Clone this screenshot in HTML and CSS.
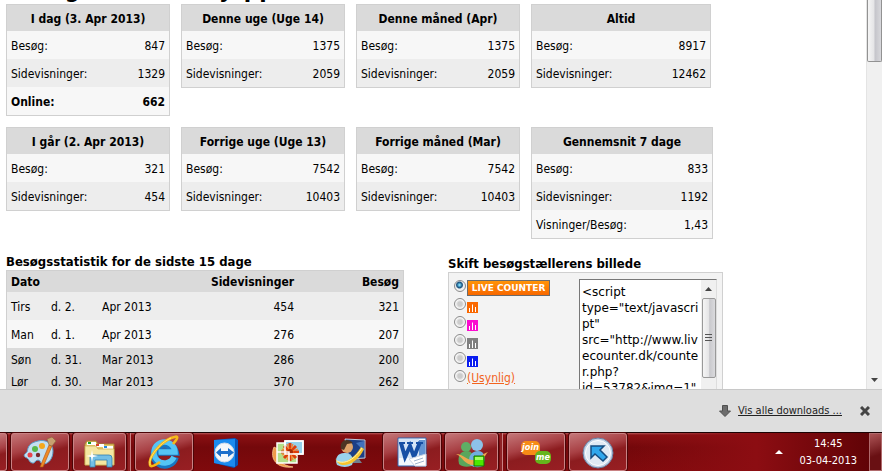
FILE: index.html
```
<!DOCTYPE html>
<html lang="da">
<head>
<meta charset="utf-8">
<title>Besøgsstatistik</title>
<link rel="stylesheet" href="styles.css">
</head>
<body>
<div class="viewport">
  <main class="page">
    <h1>Besøgstælleren hyrpp</h1>
    <div class="cards">
      <table class="card">
        <thead><tr><th colspan="2">I dag (3. Apr 2013)</th></tr></thead>
        <tbody>
          <tr><td>Besøg:</td><td>847</td></tr>
          <tr><td>Sidevisninger:</td><td>1329</td></tr>
          <tr class="strong"><td>Online:</td><td>662</td></tr>
        </tbody>
      </table>
      <table class="card">
        <thead><tr><th colspan="2">Denne uge (Uge 14)</th></tr></thead>
        <tbody>
          <tr><td>Besøg:</td><td>1375</td></tr>
          <tr><td>Sidevisninger:</td><td>2059</td></tr>
        </tbody>
      </table>
      <table class="card">
        <thead><tr><th colspan="2">Denne måned (Apr)</th></tr></thead>
        <tbody>
          <tr><td>Besøg:</td><td>1375</td></tr>
          <tr><td>Sidevisninger:</td><td>2059</td></tr>
        </tbody>
      </table>
      <table class="card total">
        <thead><tr><th colspan="2">Altid</th></tr></thead>
        <tbody>
          <tr><td>Besøg:</td><td>8917</td></tr>
          <tr><td>Sidevisninger:</td><td>12462</td></tr>
        </tbody>
      </table>
      <table class="card">
        <thead><tr><th colspan="2">I går (2. Apr 2013)</th></tr></thead>
        <tbody>
          <tr><td>Besøg:</td><td>321</td></tr>
          <tr><td>Sidevisninger:</td><td>454</td></tr>
        </tbody>
      </table>
      <table class="card">
        <thead><tr><th colspan="2">Forrige uge (Uge 13)</th></tr></thead>
        <tbody>
          <tr><td>Besøg:</td><td>7542</td></tr>
          <tr><td>Sidevisninger:</td><td>10403</td></tr>
        </tbody>
      </table>
      <table class="card">
        <thead><tr><th colspan="2">Forrige måned (Mar)</th></tr></thead>
        <tbody>
          <tr><td>Besøg:</td><td>7542</td></tr>
          <tr><td>Sidevisninger:</td><td>10403</td></tr>
        </tbody>
      </table>
      <table class="card">
        <thead><tr><th colspan="2">Gennemsnit 7 dage</th></tr></thead>
        <tbody>
          <tr><td>Besøg:</td><td>833</td></tr>
          <tr><td>Sidevisninger:</td><td>1192</td></tr>
          <tr><td>Visninger/Besøg:</td><td>1,43</td></tr>
        </tbody>
      </table>
    </div>

    <div class="columns">
      <section class="history">
        <h2>Besøgsstatistik for de sidste 15 dage</h2>
        <table class="days">
          <colgroup><col class="c-day"><col class="c-date"><col class="c-month"><col class="c-views"><col></colgroup>
          <thead><tr><th colspan="3">Dato</th><th class="num">Sidevisninger</th><th class="num">Besøg</th></tr></thead>
          <tbody>
            <tr class="even"><td>Tirs</td><td>d. 2.</td><td>Apr 2013</td><td class="num">454</td><td class="num">321</td></tr>
            <tr class="odd"><td>Man</td><td>d. 1.</td><td>Apr 2013</td><td class="num">276</td><td class="num">207</td></tr>
            <tr class="weekend"><td>Søn</td><td>d. 31.</td><td>Mar 2013</td><td class="num">286</td><td class="num">200</td></tr>
            <tr class="weekend"><td>Lør</td><td>d. 30.</td><td>Mar 2013</td><td class="num">370</td><td class="num">262</td></tr>
          </tbody>
        </table>
      </section>

      <section class="picker">
        <h2>Skift besøgstællerens billede</h2>
        <form class="box">
          <div class="choices">
            <label class="first"><input type="radio" name="img" checked><span class="badge">LIVE COUNTER</span></label>
            <label><input type="radio" name="img" aria-label="Orange"><svg class="chip orange" viewBox="0 0 11 11"><path d="M2.500 10V6M5.500 10V2.500M8.500 10V5"/></svg></label>
            <label><input type="radio" name="img" aria-label="Pink"><svg class="chip pink" viewBox="0 0 11 11"><path d="M2.500 10V6M5.500 10V2.500M8.500 10V5"/></svg></label>
            <label><input type="radio" name="img" aria-label="Grå"><svg class="chip grey" viewBox="0 0 11 11"><path d="M2.500 10V6M5.500 10V2.500M8.500 10V5"/></svg></label>
            <label><input type="radio" name="img" aria-label="Blå"><svg class="chip blue" viewBox="0 0 11 11"><path d="M2.500 10V6M5.500 10V2.500M8.500 10V5"/></svg></label>
            <label><input type="radio" name="img" aria-label="Usynlig"><a href="#usynlig">(Usynlig)</a></label>
          </div>
          <div class="code">
            <textarea aria-label="Kode" spellcheck="false">&lt;script
type="text/javascri
pt"
src="http://www.liv
ecounter.dk/counte
r.php?
id=53782&amp;img=1"</textarea>
            <div class="rail">
              <svg class="arrow" viewBox="0 0 7 4"><path d="M0 4L3.500 0L7 4Z"/></svg>
              <div class="thumb"><svg viewBox="0 0 7 9"><path d="M0 .5H7M0 3.500H7M0 6.500H7"/></svg></div>
            </div>
          </div>
        </form>
      </section>
    </div>
  </main>
  <div class="scrollbar">
    <div class="scroll-thumb"></div>
    <svg class="arrow" viewBox="0 0 7 4"><path d="M0 0H7L3.500 4Z"/></svg>
  </div>
</div>

<div class="downloads">
  <svg class="down" viewBox="0 0 12 12"><path d="M3.500 .5H8.500V6H11.500L6 11.500L.5 6H3.500Z"/></svg>
  <a href="#downloads">Vis alle downloads ...</a>
  <button class="close" aria-label="Luk"><svg viewBox="0 0 10 10"><path d="M1 1L9 9M9 1L1 9"/></svg></button>
</div>

<footer class="taskbar">
  <button class="task cut" aria-label="Program"></button>
  <button class="task" aria-label="Paint">
    <svg viewBox="0 0 34 34">
      <path d="M15 6C22 4 30 8 30 16C30 23 26 29 20 29C17 29 18 25 15 25C12 25 12 29 9 28C6 27 6 24 4 23C1 22 0 20 3 18C5 17 4 14 6 11C8 8 11 7 15 6Z" fill="#c4dff0" stroke="#5c9cc8"/>
      <circle cx="7" cy="20" r="2.500" fill="#e8434a"/><circle cx="12" cy="14" r="3" fill="#58b84a"/><circle cx="19" cy="11" r="3" fill="#f5a81c"/><circle cx="15" cy="20" r="2.200" fill="#77282c"/>
      <path d="M26 10L17 32L20 32L29 11Z" fill="#f08a24" stroke="#a85418" stroke-width=".6"/><path d="M24 4L29 2L33 6L29 11L26 10Z" fill="#c8a070" stroke="#896137" stroke-width=".6"/>
    </svg>
  </button>
  <div class="stack">
    <button class="task" aria-label="Stifinder">
      <svg viewBox="0 0 34 34">
        <path d="M2 9L4 6H13L15 9H31V30H2Z" fill="#e5c866" stroke="#a98435"/><path d="M4 7H13V10H4ZM12 9H21V12H12ZM20 11H30V14H20Z" fill="#fff"/><path d="M5 7H8V9H5Z" fill="#16a027"/><path d="M13 9H16V11H13Z" fill="#d94028"/><path d="M21 11H24V13H21Z" fill="#2189e0"/>
        <path d="M2 11H13L15 14H31V30H2Z" fill="#f5e6a0" stroke="#c8a650" stroke-width=".7"/><path d="M7 32V22Q7 20 9 20H26Q29 20 29 23V32H24V25H12V32Z" fill="#72bfe5" stroke="#317fb0" stroke-width=".8"/><path d="M9 15L10 20L15 21L10 22L9 27L8 22L3 21L8 20Z" fill="#fff"/>
      </svg>
    </button>
    <span class="edge"></span>
  </div>
  <button class="task" aria-label="Internet Explorer">
    <svg viewBox="0 0 34 34">
      <path d="M28 22A10.500 10.500 0 1 1 28 17H11.500" fill="none" stroke="#1678c4" stroke-width="7.500"/><path d="M27 22A10.500 10.500 0 1 1 28 17H11.500" fill="none" stroke="#55c5f5" stroke-width="5.500"/>
      <path d="M26 9C32 2 32 0 24 3C13 8 1 22 3 30C4 33 10 29 13 27" fill="none" stroke="#f7b918" stroke-width="2.600"/><path d="M24 3C13 8 1 22 3 30" fill="none" stroke="#ffe56b" stroke-width="1"/>
    </svg>
  </button>
  <button class="task plain" aria-label="TeamViewer">
    <svg viewBox="0 0 34 34">
      <path d="M5 5L26 3L29 5V30L25 33L5 28Z" fill="#0755ba"/><path d="M5 5L26 4V32L5 28Z" fill="#1b8bf0"/><circle cx="15.500" cy="17.500" r="9.500" fill="#f5f7fa" stroke="#d2dcea"/><path d="M7 17.500L12 13V16H19V13L25 17.500L19 22V19H12V22Z" fill="#1c6fcb"/>
    </svg>
  </button>
  <button class="task plain" aria-label="Billeder">
    <svg viewBox="0 0 34 34">
      <path d="M3 12C-2 24 6 34 22 32C10 30 5 25 7 14Z" fill="#ef9b4a" stroke="#ffd29a" stroke-width=".7"/>
      <path d="M6 8H26V28H6Z" fill="#b4e08a" stroke="#fff" stroke-width="1.500"/><path d="M14 6H32V19H14Z" fill="#95d1ed" stroke="#fff" stroke-width="1.500"/>
      <g stroke="#de3e0c" stroke-width="3"><path d="M19 8V26M10 17H28M13 11L25 23M25 11L13 23"/></g><g stroke="#ff842d" stroke-width="1.300"><path d="M16 9L22 25M11 14L27 20M22 9L16 25M27 14L11 20"/></g><circle cx="19" cy="17" r="3" fill="#a62b08"/><path d="M14 6H32V19H14ZM6 17H18V28" fill="none" stroke="#fff" stroke-width="1.500"/>
    </svg>
  </button>
  <button class="task plain" aria-label="Fjernskrivebord">
    <svg viewBox="0 0 34 34">
      <path d="M12 4L32 5V23L16 24Z" fill="#1d3f86" stroke="#c1cbdc"/><path d="M23 8L31 6V16Z" fill="#4271bb"/><path d="M18 24H26L29 28H15Z" fill="#71808f"/>
      <path d="M4 30C1 23 5 17 13 18C20 19 21 25 19 30Q12 34 4 30Z" fill="#9ad3ec"/><circle cx="14" cy="12" r="6" fill="#dfa46b"/><path d="M8 14C6 4 16 3 20 8L14 9L11 15Z" fill="#4d3423"/>
      <path d="M2 23C4 30 18 29 28 12L31 14C24 30 6 36 2 23Z" fill="#f7c52f"/><path d="M4 26C12 30 22 24 29 13" fill="none" stroke="#fff8b8"/>
    </svg>
  </button>
  <button class="task" aria-label="Word">
    <svg viewBox="0 0 34 34">
      <path d="M3 3H31V31H3Z" fill="#f4f8fd" stroke="#2f62ad"/><path d="M4 4H24V23H4Z" fill="#d4e4f6"/><path d="M24 5H30V20L24 25Z" fill="#6395d4"/><path d="M6 8L10 22L15 11L19 22L25 7" fill="none" stroke="#164fa5" stroke-width="4"/><path d="M4 8H10M12 8H18M21 8H28" stroke="#164fa5" stroke-width="2"/><path d="M14 24L31 19V31H20Z" fill="#fff" stroke="#c9d5e6"/><path d="M19 26L28 23M20 29L29 26" stroke="#9fb3ce"/>
    </svg>
  </button>
  <div class="stack">
    <button class="task" aria-label="Messenger">
      <svg viewBox="0 0 34 34">
        <circle cx="11" cy="12" r="5" fill="#5fae65"/><path d="M4 29C2 20 6 16 12 16C18 16 19 22 17 31Q8 33 4 29Z" fill="#5aa65c"/><circle cx="22" cy="10" r="6" fill="#8dc2e8"/><path d="M15 30C12 21 17 16 23 16C30 16 31 23 28 31Q21 34 15 30Z" fill="#71aede"/>
        <path d="M1 19C9 19 10 25 18 25C25 25 26 19 33 17C29 20 29 29 19 30C9 30 8 22 1 19Z" fill="#eba94e"/><path d="M19 21H29V31H19Z" fill="#4ce800" stroke="#157000"/><path d="M20 22H28V25H20Z" fill="#a2ff62"/>
      </svg>
    </button>
    <span class="edge"></span>
  </div>
  <button class="task" aria-label="join.me">
    <span class="joinme"><b class="join">join</b><b class="me">me</b></span>
  </button>
  <button class="task" aria-label="Markør">
    <svg viewBox="0 0 34 34">
      <circle cx="17" cy="18" r="15" fill="#c2d2e6" stroke="#6781a4"/><circle cx="17" cy="18" r="12.500" fill="#dfe9f4" stroke="#fff"/><path d="M10 11H23L19 15L26 22L22 26L14 19L10 23Z" fill="#30a7ed" stroke="#164c80" stroke-width="1.500"/>
    </svg>
  </button>
  <div class="tray">
    <svg class="arrow up" viewBox="0 0 8 4"><path d="M0 4L4 0L8 4Z"/></svg>
    <div class="clock"><span>14:45</span><span>03-04-2013</span></div>
    <button class="desktop" aria-label="Vis skrivebord"></button>
  </div>
</footer>
</body>
</html>
```
FILE: styles.css
```
* { box-sizing: border-box; }

body {
  margin: 0;
  height: 100vh;
  display: flex;
  flex-direction: column;
  overflow: hidden;
  background: #fff;
  color: #000;
  font: 12px/16px "DejaVu Sans Condensed", "DejaVu Sans", sans-serif;
}

button { margin: 0; padding: 0; border: 0; background: none; font: inherit; }

.viewport { flex: 1; min-height: 0; display: flex; }

.page { flex: 1; min-width: 0; overflow: hidden; padding-left: 6px; }

h1 { margin: -25px 0 0; font-size: 24px; line-height: 29px; white-space: nowrap; }

.cards {
  display: grid;
  grid-template-columns: repeat(3, 164px) 182px;
  gap: 11px;
  align-items: start;
}

table { width: 100%; border: 1px solid #d0d0d0; border-spacing: 0; }
td, th { padding: 1px 4px 0; }
th { background: #dadada; font-weight: bold; }

.card th { height: 26px; padding-top: 2px; text-align: center; }
.card td { height: 28px; padding-top: 2px; background: #f7f7f7; }
.card td:last-child { text-align: right; }
.card tr:nth-child(even) td { background: #ededed; }
.total { width: 180px; }
.strong { font-weight: bold; }

.columns { display: flex; gap: 44px; padding-top: 15px; }
.history { width: 398px; }
.picker { width: 275px; padding-top: 2px; }

h2 { margin: 0; font-size: 13px; line-height: 16px; white-space: nowrap; }

.days { table-layout: fixed; }
.days th { height: 21px; text-align: left; }
.days td { height: 28px; padding-top: 2px; }
.days .num { text-align: right; }
.even td { background: #ededed; }
.odd td { background: #f7f7f7; }
.days .weekend td { height: 22px; background: #dadada; }
.c-day { width: 40px; }
.c-date { width: 51px; }
.c-month { width: 100px; }
.c-views { width: 100px; }

.box {
  display: flex;
  justify-content: space-between;
  padding: 6px 5px 0;
  border: 1px solid #d0d0d0;
  background: #f3f3f3;
}
.choices label { display: flex; align-items: center; height: 18px; }
.choices input {
  appearance: none;
  width: 12px;
  height: 12px;
  margin: 0 1px 4px 0;
  border: 1px solid #8a8a8a;
  border-radius: 50%;
  background: radial-gradient(#ccc 30%, #f6f6f6 60%);
}
.choices input:checked { background: radial-gradient(circle at 45% 40%, #7fe0ff 5%, #124a78 35%, #f0f0f0 50%); }
.choices a { color: #f2641e; }
.badge {
  width: 83px;
  height: 16px;
  border: 1px solid #6b6b6b;
  background: linear-gradient(#ff9408, #f86800);
  color: #fff;
  font: bold 9px/14px "DejaVu Sans", sans-serif;
  text-align: center;
  white-space: nowrap;
}
.chip { width: 11px; height: 11px; margin-top: 3px; }
.chip path { stroke: #fff; stroke-width: 1; }
.orange { background: #fa6800; }
.pink { background: #fb0cd0; }
.grey { background: #808080; }
.blue { background: #0a1cf0; }

.code { display: flex; width: 138px; height: 140px; border: 1px solid #9a9a9a; border-color: #777 #ddd #ddd #777; background: #fff; }
.code textarea {
  flex: 1;
  min-width: 0;
  padding: 4px 2px;
  border: 0;
  outline: 0;
  resize: none;
  overflow: hidden;
  background: #fff;
  color: #000;
  font: 12px/16px "DejaVu Sans", sans-serif;
  white-space: pre;
}
.rail { width: 15px; background: #f0f0f0; display: flex; flex-direction: column; align-items: center; }
.arrow { width: 7px; height: 4px; fill: #444; }
.rail .arrow { margin: 7px 0; }
.thumb {
  display: flex;
  align-items: center;
  justify-content: center;
  width: 14px;
  height: 80px;
  border: 1px solid #999;
  border-radius: 2px;
  background: linear-gradient(90deg, #f5f5f5, #e4e4e6 50%, #c9c9cd 55%, #dadadd);
}
.thumb svg { width: 7px; height: 9px; stroke: #555; }

.scrollbar {
  width: 16px;
  display: flex;
  flex-direction: column;
  align-items: center;
  justify-content: space-between;
  padding-bottom: 7px;
  border-left: 1px solid #e4e4e4;
  background: #f0f0f0;
}
.scroll-thumb {
  width: 15px;
  height: 62px;
  border: 1px solid #929292;
  border-top: 0;
  border-radius: 0 0 2px 2px;
  background: linear-gradient(90deg, #f5f5f5, #e4e4e6 48%, #c4c4ca 52%, #d8d8dc);
}

.downloads {
  flex: none;
  display: flex;
  align-items: center;
  justify-content: flex-end;
  height: 43px;
  padding-right: 12px;
  border-top: 1px solid #c8c8c8;
  background: #dedede;
}
.downloads a { margin: 0 18px 0 7px; color: #222; font-size: 11px; }
.down { width: 12px; height: 12px; fill: #6c6c6c; stroke: #505050; }
.close { display: flex; }
.close svg { width: 10px; height: 10px; stroke: #444; stroke-width: 3; }

.taskbar {
  flex: none;
  display: flex;
  gap: 4px;
  height: 39px;
  border-top: 1px solid #1c0203;
  background: linear-gradient(#b8585a 0, #8a1013 2px, #74080b 14px, #800a0d 100%);
}
.task {
  display: flex;
  align-items: center;
  justify-content: center;
  width: 58px;
  height: 38px;
  border: 1px solid #c98284;
  border-radius: 3px;
  background: linear-gradient(165deg, #c47678 0, #a84044 38%, #8c1c1f 55%, #981f23 100%);
  box-shadow: 0 0 0 1px #4c0507;
}
.task svg { width: 34px; height: 34px; fill: none; }
.task.plain { border-color: transparent; background: none; box-shadow: none; }
.task.cut { width: 7px; border-left: 0; border-radius: 0 3px 3px 0; }
.stack { display: flex; gap: 2px; width: 58px; }
.stack .task { width: 53px; }
.edge { width: 3px; height: 38px; border-right: 1px solid #c98284; background: #8f2225; }

.joinme { display: flex; color: #fff; font: italic bold 9px/12px "DejaVu Sans Condensed", sans-serif; }
.join { height: 14px; padding: 0 1px; border-radius: 5px; background: #f78b16; }
.me { height: 13px; margin: 10px 0 0 -5px; padding: 0 1px; border-radius: 5px; background: #65b51c; }

.tray {
  flex: 1;
  display: flex;
  align-items: center;
  justify-content: flex-end;
  gap: 16px;
  background: linear-gradient(90deg, #74080b00, #8c0d12 50%, #5c0205);
}
.up { width: 8px; fill: #fff; }
.clock { display: flex; flex-direction: column; align-items: center; color: #fff; font-size: 11px; line-height: 17px; }
.desktop { width: 13px; height: 38px; margin-left: -4px; border: 1px solid #b06a6c; background: linear-gradient(160deg, #ad5557, #691013 60%); }
```
